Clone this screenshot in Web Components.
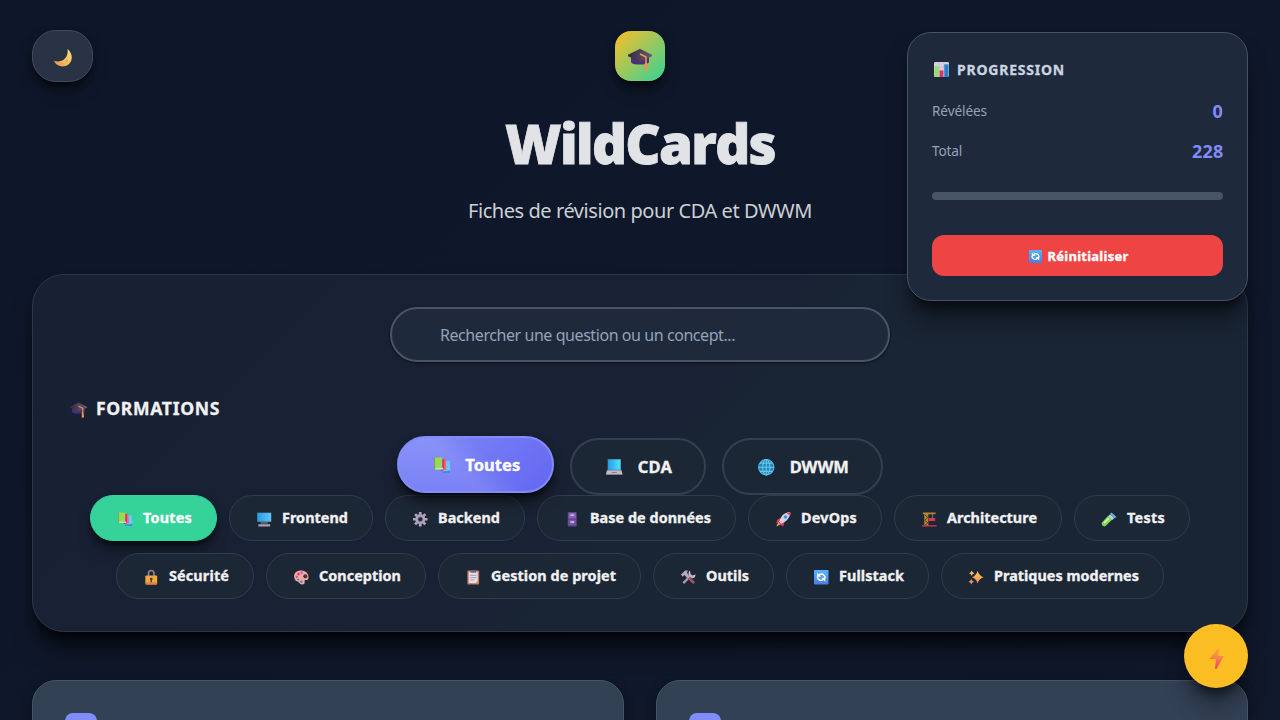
<!DOCTYPE html>
<html lang="fr">
<head>
<meta charset="utf-8">
<title>WildCards</title>
<style>
  html, body { margin: 0; height: 720px; overflow: hidden; }
  body { background: linear-gradient(135deg, #0e1729, #10182b); font-family: "Noto Sans", "Open Sans", sans-serif; color: #f1f5f9; }
</style>
</head>
<body>
<wild-app></wild-app>
<script>
const ICONS = {
  moon: '<defs><linearGradient id="g" x1="1" y1="0" x2="0" y2="1"><stop offset="0" stop-color="#ffe17a"/><stop offset=".55" stop-color="#f3bd60"/><stop offset="1" stop-color="#f08a48"/></linearGradient></defs><path fill="url(#g)" d="M24 0C34 8 34 22 25 28C17 34 4 31 0 21C11 26 27 17 24 0Z"/><circle cx="23" cy="21" r="2" fill="#dca04c"/><circle cx="15" cy="26" r="1.5" fill="#dca04c"/>',
  cap: '<defs><linearGradient id="g"><stop offset="0" stop-color="#352b3f"/><stop offset="1" stop-color="#6a5a74"/></linearGradient></defs><path fill="#4d2f78" d="M4 12h24v6c0 4-8 4-12 4S4 22 4 18z"/><path fill="url(#g)" d="M16 1L32 9v2L16 18L0 11V9z"/><path d="M16 8l8 4v9" fill="none" stroke="#e6a23c" stroke-width="2"/><path fill="#ff8d4e" d="M22.500 20h3l1 9h-4.500z"/>',
  chart: '<rect width="32" height="32" rx="3" fill="#d9d0df"/><path d="M0 11h32M0 21h32M11 0v32M21 0v32" stroke="#b9aec4" stroke-width="1"/><rect x="1" y="9" width="9" height="23" fill="#91df69"/><rect x="12" y="18" width="8" height="14" fill="#e1306e"/><rect x="22" y="5" width="9" height="27" fill="#267fce"/>',
  refresh: '<defs><linearGradient id="g" x2="0" y2="1"><stop offset="0" stop-color="#58b4ff"/><stop offset="1" stop-color="#4a7de2"/></linearGradient></defs><rect width="32" height="32" rx="2" fill="url(#g)"/><path d="M11 11.500Q17 6 22 11.500T22.500 17M21 20.500Q15 26 10 20.500T9.500 15" fill="none" stroke="#fff" stroke-width="3.200"/><path fill="#fff" d="M7 6v9h9zM25 26v-9h-9z"/>',
  books: '<path fill="#69c9f7" d="M20 9l10-2 2 20-14 3z"/><path fill="#418de4" d="M15 28l16-2v5H16z"/><path fill="#dc2f62" d="M13 5l8-1 2 20-10 3z"/><path fill="#f76689" d="M20 4l3 1 1 19-4 2z"/><path fill="#6caf45" d="M0 2h3v22H0z"/><path fill="#9bd85a" d="M2 1h14v20H2z"/><path fill="#b9f4a0" d="M4 21h13l2 3H1z"/>',
  desktop: '<defs><linearGradient id="g"><stop offset="0" stop-color="#249ee7"/><stop offset="1" stop-color="#63c4f5"/></linearGradient></defs><rect x="0" y="1" width="32" height="21" rx="1" fill="#4a596a"/><rect x="1" y="2" width="30" height="19" fill="url(#g)"/><path fill="#67606e" d="M8 22h16v4H8z"/><path fill="#aaa0ad" d="M3 27h26v5H3z"/>',
  gear: '<g fill="#b2a4be"><circle cx="16" cy="16" r="11"/><path d="M13 0h6v6h-6zM13 26h6v6h-6zM0 13h6v6H0zM26 13h6v6h-6z"/><path d="M13 0h6v6h-6zM13 26h6v6h-6zM0 13h6v6H0zM26 13h6v6h-6z" transform="rotate(45 16 16)"/></g><circle cx="16" cy="16" r="5" fill="#1b2635" stroke="#78668a" stroke-width="2"/>',
  cabinet: '<rect x="6" width="20" height="32" rx="2" fill="#5d4489"/><rect x="8" y="2" width="16" height="12" fill="#8365b1"/><rect x="8" y="17" width="16" height="12" fill="#7453a6"/><path d="M12 7h8M12 22h8" stroke="#ddd1ed" stroke-width="3"/>',
  laptop: '<defs><linearGradient id="g"><stop offset="0" stop-color="#259fe7"/><stop offset="1" stop-color="#50e3ff"/></linearGradient></defs><path fill="#5a6574" d="M3 0h26v22H3z"/><path fill="url(#g)" d="M4 1h24v20H4z"/><path fill="#c3b8c9" d="M2 22h28l2 7H0z"/><path fill="#8b7e94" d="M0 29h32v2H0zM11 25h10v2H11z"/>',
  globe: '<circle cx="16" cy="16" r="15" fill="#2586b8" stroke="#54bde9" stroke-width="2"/><ellipse cx="16" cy="16" rx="7" ry="15" fill="none" stroke="#65c7ef" stroke-width="2"/><path d="M16 1v30M1 16h30M4 8h24M4 24h24" stroke="#65c7ef" stroke-width="2"/>',
  rocket: '<path fill="#eb315f" d="M10 13L3 17l-3 8 10-3zM19 21l-3 11-7-4 1-7z"/><path fill="#d8d1dd" d="M29 0C17 2 10 10 7 22l4 4C22 22 30 14 32 3z"/><path fill="#ea3d67" d="M23 2l9-2-1 9z"/><circle cx="21" cy="11" r="4" fill="#389be7"/><path fill="#ffae42" d="M5 22l5 5-9 5z"/>',
  crane: '<path fill="#b7892d" d="M2 1h28v4H2zM5 4h9v26H5z"/><path d="M6 6l7 6-7 6 7 6-7 5" fill="none" stroke="#493c32" stroke-width="2"/><path d="M23 4v10" stroke="#94798c" stroke-width="2"/><path fill="#dc3850" d="M15 13h14v7H15zM0 29h32v3H0z"/>',
  tube: '<path fill="#77b2d7" d="M21 1l11 10-4 3L18 4z"/><path fill="#b2d9e5" d="M18 5l9 8-5 5-9-8z"/><path fill="#80d65c" d="M13 9l9 8L8 31q-4 2-7-1t-1-7z"/><path d="M5 24l10-10" stroke="#c5ff97" stroke-width="4"/>',
  lock: '<path d="M10 14V7q0-6 6-6t6 6v7" fill="none" stroke="#8a8792" stroke-width="3.500"/><rect x="3" y="12" width="26" height="20" rx="2" fill="#f1a93c"/><path fill="#e68238" d="M5 27h24v3q0 2-2 2H5z"/><circle cx="16" cy="20" r="3" fill="#453341"/><path fill="#453341" d="M14.500 20h3v7h-3z"/>',
  palette: '<path fill="#f3a7a0" d="M15 1C3 1-2 10 1 18s5 6 8 8 4 6 9 6 7-4 5-8c2-4 9 1 9-8C32 6 25 1 15 1z"/><circle cx="10" cy="9" r="3" fill="#dd3779"/><circle cx="17" cy="6" r="2.500" fill="#9e54d7"/><circle cx="6" cy="15" r="2.500" fill="#e2438a"/><circle cx="9" cy="21" r="2.500" fill="#15b5b7"/><circle cx="16" cy="26" r="2.800" fill="#438de8"/><circle cx="25" cy="14" r="4.500" fill="#453342"/>',
  clipboard: '<rect x="3" y="1" width="26" height="31" rx="2" fill="#bd7a5b"/><rect x="6" y="4" width="20" height="25" fill="#e4dce7"/><path fill="#e8925a" d="M20 29l6-6v6z"/><path fill="#706478" d="M10 0h12v6H10z"/><path d="M9 12h14M9 17h14M9 22h9" stroke="#a79aac" stroke-width="2"/>',
  tools: '<path d="M5 29L22 12" stroke="#a79ab2" stroke-width="5"/><path fill="#c1b6ca" d="M20 1l1 8 4 3 7-2q0 9-8 8l-7-5q-2-9 3-12z"/><path d="M17 17l12 12" stroke="#a65362" stroke-width="6"/><path fill="#b5a9ba" d="M0 10L9 1h7l-3 4 6 11-4 3-8-8-3 4z"/>',
  sparkles: '<defs><linearGradient id="g" x2="0" y2="1"><stop offset="0" stop-color="#ffc957"/><stop offset="1" stop-color="#f08455"/></linearGradient></defs><path fill="url(#g)" d="M19 2q3 10 13 14-10 3-13 14-3-11-12-14Q16 12 19 2zM6 1q1 5 6 6-5 1-6 6-1-5-6-6 5-1 6-6zM5 20q1 5 6 6-5 1-6 6-1-5-6-6 5-1 6-6z"/>',
  bolt: '<defs><linearGradient id="g" x2="0" y2="1"><stop offset="0" stop-color="#ffae43"/><stop offset=".5" stop-color="#f78449"/><stop offset="1" stop-color="#f04461"/></linearGradient></defs><path fill="url(#g)" d="M21 0L6 18h9l-1 14h2L26 14h-8l3-14z"/>'
};

class EmojiIcon extends HTMLElement {
  connectedCallback() {
    const s = this.getAttribute('size') || 15;
    this.attachShadow({mode:'open'}).innerHTML = `<style>:host{display:block;flex:none;width:${s}px;height:${s}px}svg{display:block;overflow:visible}</style><svg width="${s}" height="${s}" viewBox="0 0 32 32" aria-hidden="true">${ICONS[this.getAttribute('name')]}</svg>`;
  }
}
customElements.define('emoji-icon', EmojiIcon);

// One line of text whose tracking is adjusted to fill a given measure.
class FitText extends HTMLElement {
  connectedCallback() {
    const w = +this.getAttribute('width');
    this.attachShadow({mode:'open'}).innerHTML = `<style>:host{display:block;flex:none;width:${w}px;white-space:nowrap}span{display:inline-block}</style><span></span>`;
    const span = this.shadowRoot.querySelector('span');
    span.textContent = this.getAttribute('text');
    span.style.letterSpacing = '0px';
    const n = span.textContent.length;
    span.style.letterSpacing = ((w - span.getBoundingClientRect().width) / n).toFixed(3) + 'px';
  }
}
customElements.define('fit-text', FitText);

class FilterPill extends HTMLElement {
  connectedCallback() {
    this.attachShadow({mode:'open'}).innerHTML = `<style>
      :host{display:flex;box-sizing:border-box;align-items:center;height:46px;padding:0 24px;gap:8px;border:1px solid #2f3c4c;border-radius:24px;background:#1c2736;font-size:14.400px;line-height:20px;font-weight:700;color:#f1f1f2;-webkit-text-stroke:.35px currentColor}
      .i{display:flex;justify-content:center;width:20px;padding-top:2px}
      fit-text{margin-top:-1px}
      :host([large]){height:57px;padding:0 32px;gap:12.500px;border:2px solid #323f4f;border-radius:32px;font-size:16.500px}
      :host([large]) .i{width:21.500px;padding-top:2px}
      :host([large]) fit-text{margin-top:0}
      :host([active]){background:#35d399;border-color:#35d399;color:#fff;box-shadow:0 10px 15px -3px rgba(0,0,0,.55),0 4px 6px -2px rgba(0,0,0,.5)}
      :host([large][active]){background:linear-gradient(45deg,transparent 0%,rgba(255,255,255,.1) 42%,transparent 60%) border-box,linear-gradient(135deg,#818cf8 0%,#6366f1 100%) border-box;border-color:#818cf8;transform:translateY(-2px);box-shadow:0 10px 15px -3px rgba(0,0,0,.65),0 4px 6px -2px rgba(0,0,0,.6)}
    </style><span class="i"><emoji-icon name="${this.getAttribute('icon')}" size="${this.hasAttribute('large')?16.5:14.5}"></emoji-icon></span><fit-text text="${this.getAttribute('label')}" width="${this.getAttribute('measure')}"></fit-text>`;
  }
}
customElements.define('filter-pill', FilterPill);

class ProgressPanel extends HTMLElement {
  connectedCallback() {
    this.attachShadow({mode:'open'}).innerHTML = `<style>
      :host{display:flex;flex-direction:column;box-sizing:border-box;width:341px;height:269px;padding:24px;border:1px solid #455365;border-radius:24px;background:#1e293b;box-shadow:0 20px 25px -5px rgba(0,0,0,.5),0 10px 10px -5px rgba(0,0,0,.45)}
      h3{display:flex;align-items:center;gap:8px;margin:0;padding-left:2px;height:24px;font-size:14px;font-weight:700;color:#cbd5e1;-webkit-text-stroke:.3px currentColor}
      .row{display:flex;justify-content:space-between;align-items:center;height:24px;margin-top:16px;font-size:13.600px;color:#94a3b8}
      .row.first{margin-top:17px}
      b{font-size:18px;font-weight:700;color:#818cf8;margin:1px -.5px 0 0}
      .bar{height:8px;border-radius:4px;background:#475569;margin-top:30px}
      button{display:flex;align-items:center;justify-content:center;gap:6px;width:100%;height:41px;margin-top:35px;padding:0 0 0 2px;border:0;border-radius:12px;background:#ef4444;color:#fff;font:700 13px "Noto Sans",sans-serif;-webkit-text-stroke:.35px currentColor}
      button emoji-icon{margin-top:1px}
    </style>
    <h3><emoji-icon name="chart" size="15"></emoji-icon><fit-text text="PROGRESSION" width="108"></fit-text></h3>
    <div class="row first"><fit-text text="Révélées" width="55"></fit-text><b><fit-text text="0" width="11"></fit-text></b></div>
    <div class="row"><fit-text text="Total" width="30"></fit-text><b><fit-text text="228" width="31.5"></fit-text></b></div>
    <div class="bar"></div>
    <button><emoji-icon name="refresh" size="13"></emoji-icon><fit-text text="Réinitialiser" width="81"></fit-text></button>`;
  }
}
customElements.define('progress-panel', ProgressPanel);

class SiteHeader extends HTMLElement {
  connectedCallback() {
    this.attachShadow({mode:'open'}).innerHTML = `<style>
      :host{display:flex;flex-direction:column;align-items:center;box-sizing:border-box;height:274px;padding-top:31px}
      .logo{display:flex;align-items:center;justify-content:center;box-sizing:border-box;width:50px;height:50px;padding-top:7px;border-radius:16px;background:linear-gradient(135deg,#fbbf24,#34d399);box-shadow:0 10px 15px -3px rgba(0,0,0,.5),0 4px 6px -2px rgba(0,0,0,.5)}
      h1{margin:26px 0 0;font-size:54.500px;line-height:72px;font-weight:800;font-family:"Open Sans","Noto Sans",sans-serif;color:#e1e3e6;-webkit-text-stroke:.8px currentColor}
      p{margin:19px 0 0;font-size:20px;line-height:26px;color:#cdd0d5}
    </style>
    <div class="logo"><emoji-icon name="cap" size="24"></emoji-icon></div>
    <h1><fit-text text="WildCards" width="270"></fit-text></h1>
    <p><fit-text text="Fiches de révision pour CDA et DWWM" width="344"></fit-text></p>`;
  }
}
customElements.define('site-header', SiteHeader);

class SearchField extends HTMLElement {
  connectedCallback() {
    this.attachShadow({mode:'open'}).innerHTML = `<style>
      :host{display:flex;align-items:center;box-sizing:border-box;width:500px;height:55px;padding:0 48px;border:2px solid #475569;border-radius:28px;background:#1e293b;color:#94a3b8;font-size:16px;box-shadow:0 1px 3px rgba(0,0,0,.6)}
    </style><fit-text text="Rechercher une question ou un concept..." width="295"></fit-text>`;
  }
}
customElements.define('search-field', SearchField);

class FilterPanel extends HTMLElement {
  connectedCallback() {
    const pill = ([i,l,m], x='') => `<filter-pill icon="${i}" label="${l}" measure="${m}" ${x}></filter-pill>`;
    const r1 = [['books','Toutes',49],['desktop','Frontend',66],['gear','Backend',62],['cabinet','Base de données',121],['rocket','DevOps',56],['crane','Architecture',90],['tube','Tests',38]];
    const r2 = [['lock','Sécurité',60],['palette','Conception',82],['clipboard','Gestion de projet',125],['tools','Outils',43],['refresh','Fullstack',65],['sparkles','Pratiques modernes',145]];
    this.attachShadow({mode:'open'}).innerHTML = `<style>
      :host{display:flex;flex-direction:column;align-items:center;box-sizing:border-box;height:358px;margin:0 32px;padding:32px;border:1px solid #2b384a;border-radius:32px;background:linear-gradient(135deg,#182133 0%,#192234 48%,#192434 54%,#192534 100%);box-shadow:0 20px 25px -5px rgba(0,0,0,.6),0 10px 10px -5px rgba(0,0,0,.65)}
      h2{display:flex;align-self:stretch;align-items:center;gap:9.500px;height:26px;margin:33px 0 0;padding-left:4.500px;font-size:17.600px;font-weight:700;color:#f1f1f3;-webkit-text-stroke:.3px currentColor}
      h2 emoji-icon{margin-top:4px}
      .big{display:flex;gap:15.500px;margin-top:17px}
      .row{display:flex;gap:12px}
      .row + .row{margin-top:12px}
    </style>
    <search-field></search-field>
    <h2><emoji-icon name="cap" size="17"></emoji-icon><fit-text text="FORMATIONS" width="124"></fit-text></h2>
    <div class="big">${pill(['books','Toutes',55],'large active')}${pill(['laptop','CDA',34.5],'large')}${pill(['globe','DWWM',59],'large')}</div>
    <div class="row">${r1.map((p,i)=>pill(p,i?'':'active')).join('')}</div>
    <div class="row">${r2.map(p=>pill(p)).join('')}</div>`;
  }
}
customElements.define('filter-panel', FilterPanel);

class QuestionCard extends HTMLElement {
  connectedCallback() {
    this.attachShadow({mode:'open'}).innerHTML = `<style>
      :host{display:block;box-sizing:border-box;height:240px;padding:32px;border:1px solid #465467;border-radius:24px;background:#334155;box-shadow:0 4px 12px rgba(0,0,0,.4)}
      .mark{width:32px;height:32px;border-radius:8px;background:#818cf8}
    </style><div class="mark"></div>`;
  }
}
customElements.define('question-card', QuestionCard);

class WildApp extends HTMLElement {
  connectedCallback() {
    this.attachShadow({mode:'open'}).innerHTML = `<style>
      :host{display:block;position:relative;height:720px;overflow:hidden}
      .cards{display:grid;grid-template-columns:1fr 1fr;gap:32px;margin:48px 32px 0}
      .theme{position:absolute;left:32px;top:30px;display:flex;align-items:center;justify-content:center;box-sizing:border-box;width:61px;height:52px;padding:4px 0 0;border:1px solid #404b5f;border-radius:24px;background:#2a3346;box-shadow:0 10px 15px -3px rgba(0,0,0,.5),0 4px 6px -2px rgba(0,0,0,.5)}
      progress-panel{position:absolute;right:32px;top:32px}
      .fab{position:absolute;right:32px;top:624px;display:flex;align-items:center;justify-content:center;width:64px;height:64px;box-sizing:border-box;padding:3px 0 0;border:0;border-radius:50%;background:#fbbf24;box-shadow:0 20px 25px -5px rgba(0,0,0,.45),0 10px 10px -5px rgba(0,0,0,.45)}
    </style>
    <site-header></site-header>
    <filter-panel></filter-panel>
    <div class="cards"><question-card></question-card><question-card></question-card></div>
    <button class="theme" aria-label="Thème"><emoji-icon name="moon" size="18"></emoji-icon></button>
    <progress-panel></progress-panel>
    <button class="fab" aria-label="Actions rapides"><emoji-icon name="bolt" size="23"></emoji-icon></button>`;
  }
}
customElements.define('wild-app', WildApp);
</script>
</body>
</html>
